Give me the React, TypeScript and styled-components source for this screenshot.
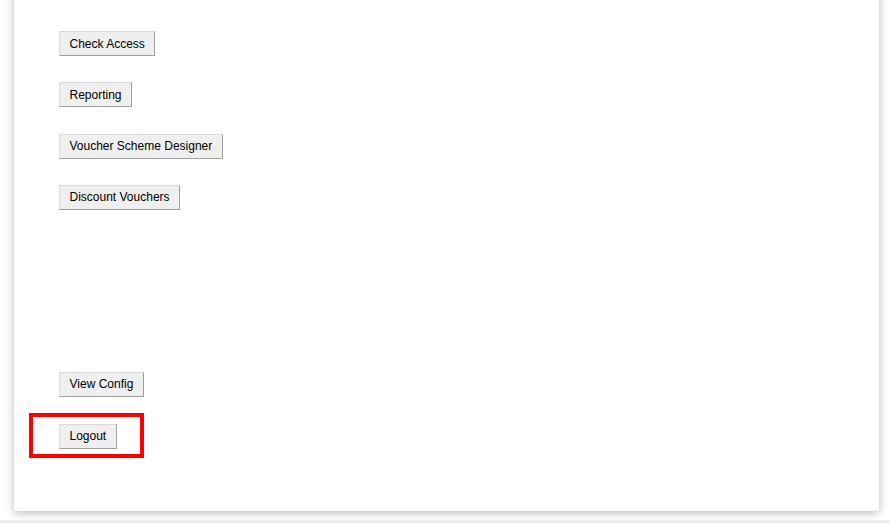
import styled, { createGlobalStyle } from "styled-components";

const GlobalStyle = createGlobalStyle`
  html, body {
    margin: 0;
    padding: 0;
    background: #ffffff;
    overflow: hidden;
  }
`;

const Page = styled.div`
  width: 890px;
  height: 530px;
  padding: 0 11px 0 14px;
  box-sizing: border-box;
  display: flex;
  flex-direction: column;
  font-family: "Liberation Sans", Arial, sans-serif;
`;

const Card = styled.div`
  margin-top: -12px;
  height: 523px;
  box-sizing: border-box;
  background: #ffffff;
  border-radius: 3px;
  box-shadow: 0 2px 10px rgba(0, 0, 0, 0.28);
  padding: 43px 0 0 45px;
  display: flex;
  flex-direction: column;
  align-items: flex-start;
`;

const Row = styled.div<{ $gap?: number }>`
  height: 25px;
  margin-bottom: ${(p) => p.$gap ?? 26.33}px;
  display: flex;
  align-items: center;
`;

const Button = styled.button`
  height: 25px;
  box-sizing: border-box;
  padding: 0 9.5px;
  font-family: "Liberation Sans", Arial, sans-serif;
  font-size: 12px;
  color: #000;
  background: #efefef;
  border: 1px solid;
  border-color: #dadada #9f9f9f #9f9f9f #dadada;
  border-radius: 0;
  cursor: pointer;
`;

const Highlight = styled.div`
  margin-left: -30px;
  padding: 7px 23px 5px 26px;
  border: 4px solid #ff0000;
  display: flex;
`;

const FooterLine = styled.div`
  margin: 9px -11px 0 -14px;
  height: 2px;
  background: #e9e9e9;
  border-top: 1px solid #f3f3f3;
`;

export default function App() {
  return (
    <>
      <GlobalStyle />
      <Page>
        <Card>
          <Row>
            <Button>Check Access</Button>
          </Row>
          <Row>
            <Button>Reporting</Button>
          </Row>
          <Row>
            <Button>Voucher Scheme Designer</Button>
          </Row>
          <Row $gap={162}>
            <Button>Discount Vouchers</Button>
          </Row>
          <Row $gap={16}>
            <Button>View Config</Button>
          </Row>
          <Highlight>
            <Button>Logout</Button>
          </Highlight>
        </Card>
        <FooterLine />
      </Page>
    </>
  );
}
